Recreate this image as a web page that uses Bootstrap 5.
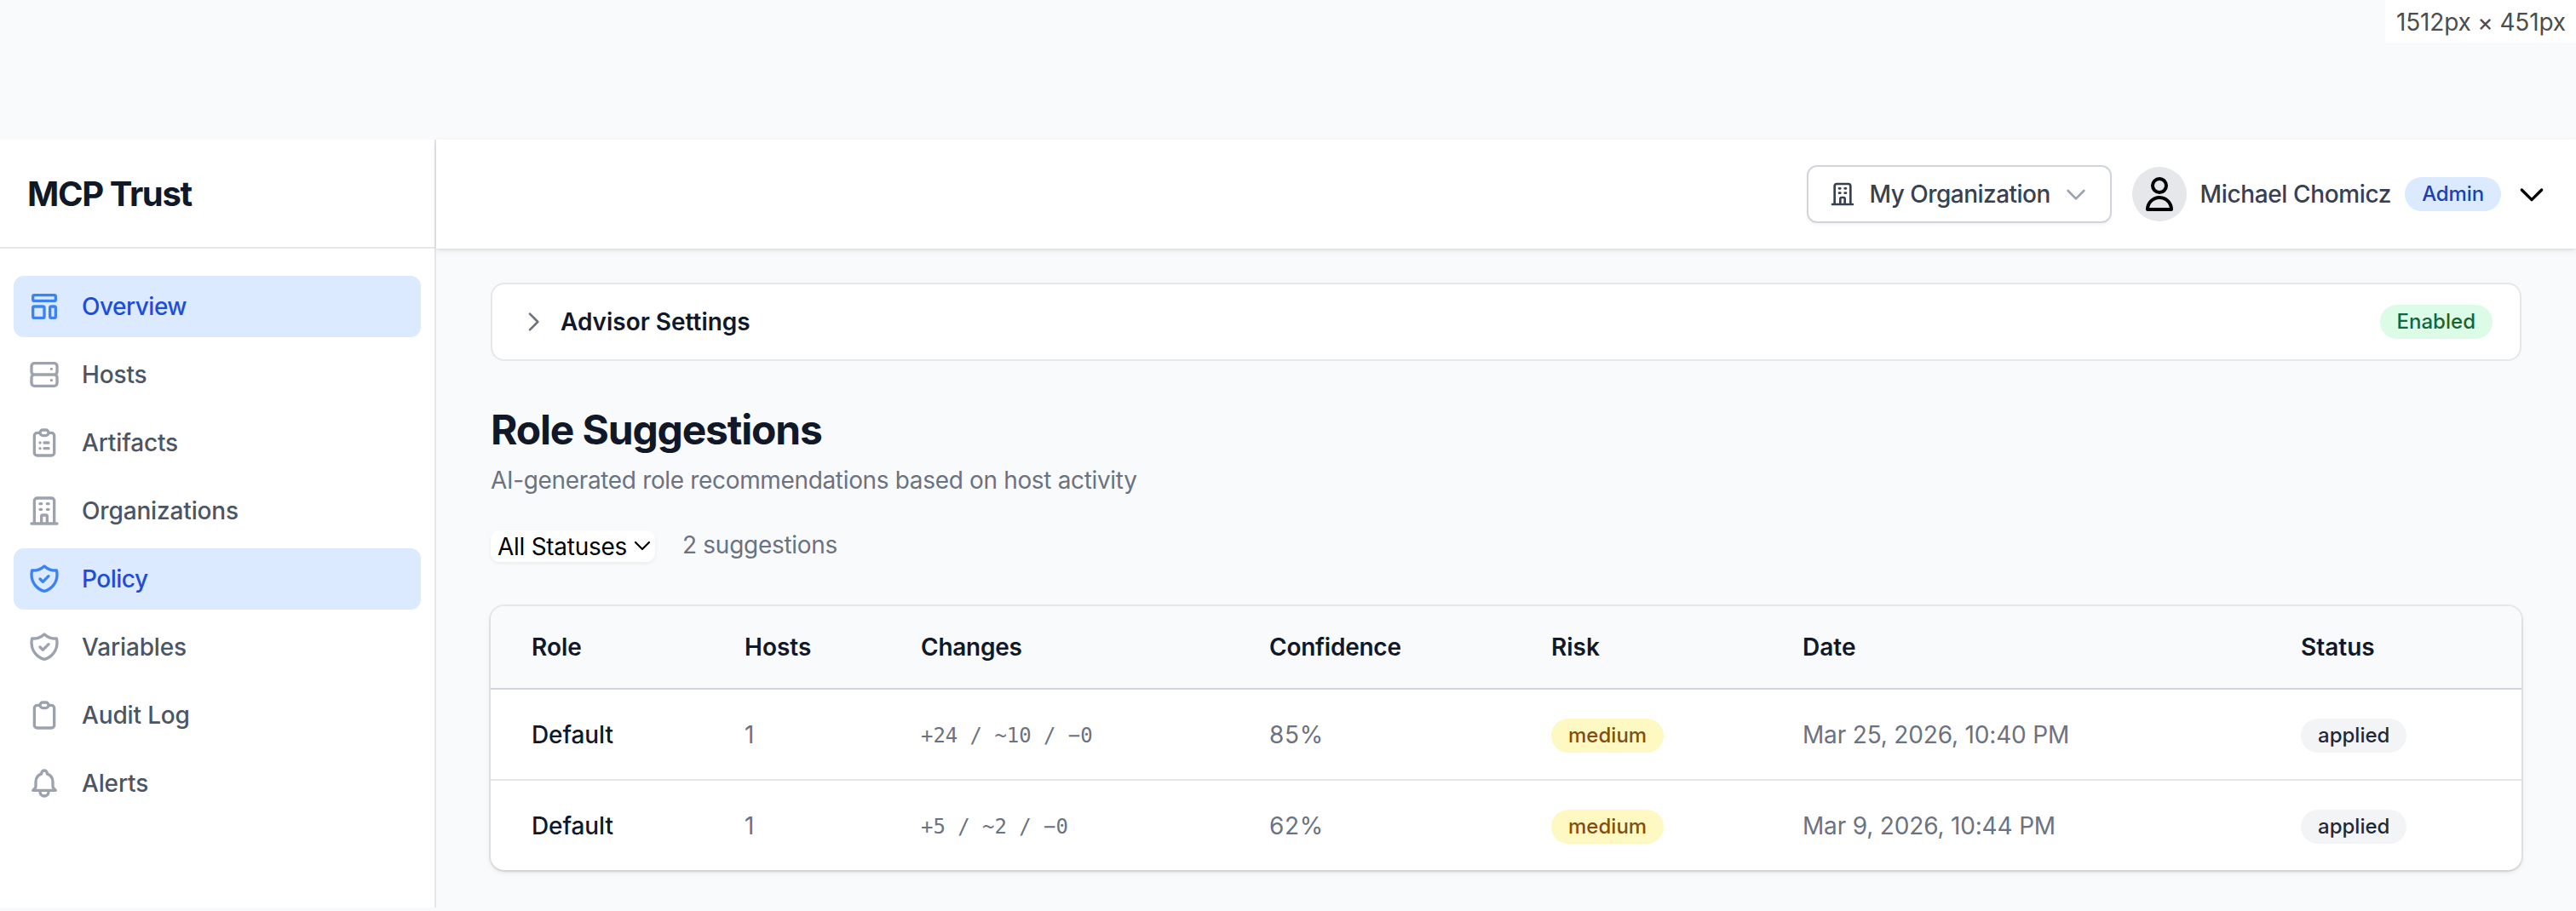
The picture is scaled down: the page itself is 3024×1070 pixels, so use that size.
<!DOCTYPE html>
<html lang="en">
<head>
<meta charset="utf-8">
<meta name="viewport" content="width=device-width, initial-scale=1">
<title>MCP Trust</title>
<link rel="stylesheet" href="https://cdn.jsdelivr.net/npm/bootstrap@5.3.0/dist/css/bootstrap.min.css">
<style>
  body { font-family: Inter, "Liberation Sans", sans-serif; font-size: 28px; line-height: 40px; letter-spacing: -.17px; background: #f9fafc; color: #111827; height: 1070px; overflow: hidden; }
  svg { fill: none; stroke: currentColor; stroke-width: 2; stroke-linecap: round; stroke-linejoin: round; flex: none; display: block; }
  .i32 { width: 32px; height: 32px; }
  .i40 { width: 40px; height: 40px; }
  .i48 { width: 48px; height: 48px; }
  .topstrip { height: 164px; }
  .sizetag { width: 224px; height: 50px; background: #fff; color: #4d4d4d; padding: 6px 0 0 13px; white-space: nowrap; }
  .shell { height: 902px; }
  .sidebar { width: 512px; background: #fff; border-right: 2px solid #e5e7eb; }
  .brand { height: 128px; border-bottom: 2px solid #e5e7eb; padding: 2px 0 0 32px; font-size: 40px; font-weight: 650; letter-spacing: -1.35px; }
  .sidenav { padding: 32px 16px; gap: 8px; }
  .sidenav .nav-link { height: 72px; padding: 0 16px; gap: 24px; border-radius: 12px; color: #4b5563; font-weight: 500; letter-spacing: -.15px; }
  .sidenav .nav-link svg { color: #9ca3af; }
  .sidenav .nav-link.active { background: #dbeafe; color: #1d4ed8; letter-spacing: -.5px; }
  .sidenav .nav-link.active svg { color: #3b82f6; }
  .topbar { height: 128px; background: #fff; padding-right: 32px; color: #374151; font-weight: 500; box-shadow: 0 2px 6px rgba(0,0,0,.1), 0 2px 4px -2px rgba(0,0,0,.1); }
  .orgbtn { width: 358px; height: 68px; border: 2px solid #d1d5db; border-radius: 12px; padding: 0 24px; margin-right: 24px; background: #fff; box-shadow: 0 2px 4px rgba(0,0,0,.05); letter-spacing: -.52px; white-space: nowrap; }
  .avatar { width: 64px; height: 64px; background: #e5e7eb; color: #000; margin-right: 16px; }
  .pill { height: 40px; padding: 0 20px; border-radius: 20px; font-size: 24px; font-weight: 500; letter-spacing: .02px; white-space: nowrap; display: inline-flex; align-items: center; }
  .pill-blue { background: #dbeafe; color: #1e40af; }
  .pill-green { background: #dcfce7; color: #166534; }
  .pill-yellow { background: #fef9c3; color: #854d0e; }
  .pill-gray { background: #f3f4f6; color: #1f2937; }
  .content { padding: 40px 64px 0; }
  .advisor { height: 92px; border: 2px solid #e5e7eb; border-radius: 16px; background: #fff; padding: 0 32px; font-weight: 600; letter-spacing: -.02px; }
  .title { font-size: 48px; line-height: 64px; font-weight: 700; letter-spacing: -1.18px; margin: 48px 0 8px; padding-top: 1px; height: 64px; }
  .muted { color: #6b7280; }
  .filters { height: 40px; margin: 36px 0 52px; }
  .statuspick { width: 193px; height: 37px; border-radius: 10px; background: #fff; color: #000; padding-left: 8px; letter-spacing: -.28px; box-shadow: 0 2px 4px rgba(0,0,0,.06); white-space: nowrap; }
  .statuspick svg { width: 20px; height: 12px; stroke-width: 2.2; margin: -2px 0 0 8px; }
  .panel { border-radius: 16px; overflow: hidden; background: #fff; box-shadow: 0 0 0 2px rgba(0,0,0,.06), 0 2px 6px rgba(0,0,0,.1), 0 2px 4px -2px rgba(0,0,0,.1); }
  .grid-table { width: 2384px; table-layout: fixed; border-collapse: separate; border-spacing: 0; }
  .grid-table th { height: 98px; padding: 0; font-weight: 600; letter-spacing: 0; background: #f9fafc; border-bottom: 2px solid #d1d5db; }
  .grid-table th:nth-child(3), .grid-table th:nth-child(4) { letter-spacing: -.25px; }
  .grid-table td { height: 107px; padding: 0; vertical-align: middle; color: #6b7280; border-bottom: 2px solid #e5e7eb; }
  .grid-table tr:last-child td { height: 105px; border-bottom: 0; }
  .grid-table th:first-child, .grid-table td:first-child { padding-left: 48px; }
  .grid-table td:first-child { color: #111827; font-weight: 500; letter-spacing: -.1px; }
  .grid-table td:nth-child(4) { letter-spacing: .7px; }
  .grid-table td .pill { vertical-align: middle; }
  .grid-table td.delta { font-family: "DejaVu Sans Mono", "Liberation Mono", monospace; font-size: 24px; letter-spacing: -.05px; padding-top: 2px; }
</style>
<script defer src="https://cdn.jsdelivr.net/npm/bootstrap@5.3.0/dist/js/bootstrap.bundle.min.js"></script>
</head>
<body>
<div class="topstrip d-flex justify-content-end align-items-start"><div class="sizetag">1512px × 451px</div></div>
<div class="shell d-flex">
  <aside class="sidebar flex-shrink-0">
    <div class="brand d-flex align-items-center">MCP Trust</div>
    <nav class="sidenav nav flex-column">
      <a class="nav-link active d-flex align-items-center" href="#"><svg class="i40" viewBox="0 0 24 24"><path d="M4 5a1 1 0 011-1h14a1 1 0 011 1v2a1 1 0 01-1 1H5a1 1 0 01-1-1V5zM4 13a1 1 0 011-1h6a1 1 0 011 1v6a1 1 0 01-1 1H5a1 1 0 01-1-1v-6zM16 13a1 1 0 011-1h2a1 1 0 011 1v6a1 1 0 01-1 1h-2a1 1 0 01-1-1v-6z"/></svg>Overview</a>
      <a class="nav-link d-flex align-items-center" href="#"><svg class="i40" viewBox="0 0 24 24"><path d="M5 12h14M5 12a2 2 0 01-2-2V6a2 2 0 012-2h14a2 2 0 012 2v4a2 2 0 01-2 2M5 12a2 2 0 00-2 2v4a2 2 0 002 2h14a2 2 0 002-2v-4a2 2 0 00-2-2m-2-4h.01M17 16h.01"/></svg>Hosts</a>
      <a class="nav-link d-flex align-items-center" href="#"><svg class="i40" viewBox="0 0 24 24"><path d="M9 5H7a2 2 0 00-2 2v12a2 2 0 002 2h10a2 2 0 002-2V7a2 2 0 00-2-2h-2M9 5a2 2 0 002 2h2a2 2 0 002-2M9 5a2 2 0 012-2h2a2 2 0 012 2m-3 7h3m-3 4h3m-6-4h.01M9 16h.01"/></svg>Artifacts</a>
      <a class="nav-link d-flex align-items-center" href="#"><svg class="i40" viewBox="0 0 24 24"><path d="M19 21V5a2 2 0 00-2-2H7a2 2 0 00-2 2v16m14 0h2m-2 0h-5m-9 0H3m2 0h5M9 7h1m-1 4h1m4-4h1m-1 4h1m-5 10v-5a1 1 0 011-1h2a1 1 0 011 1v5m-4 0h4"/></svg>Organizations</a>
      <a class="nav-link active d-flex align-items-center" href="#"><svg class="i40" viewBox="0 0 24 24"><path d="M9 12l2 2 4-4m5.618-4.016A11.955 11.955 0 0112 2.944a11.955 11.955 0 01-8.618 3.04A12.02 12.02 0 003 9c0 5.591 3.824 10.29 9 11.622 5.176-1.332 9-6.03 9-11.622 0-1.042-.133-2.052-.382-3.016z"/></svg>Policy</a>
      <a class="nav-link d-flex align-items-center" href="#"><svg class="i40" viewBox="0 0 24 24"><path d="M9 12l2 2 4-4m5.618-4.016A11.955 11.955 0 0112 2.944a11.955 11.955 0 01-8.618 3.04A12.02 12.02 0 003 9c0 5.591 3.824 10.29 9 11.622 5.176-1.332 9-6.03 9-11.622 0-1.042-.133-2.052-.382-3.016z"/></svg>Variables</a>
      <a class="nav-link d-flex align-items-center" href="#"><svg class="i40" viewBox="0 0 24 24"><path d="M9 5H7a2 2 0 00-2 2v12a2 2 0 002 2h10a2 2 0 002-2V7a2 2 0 00-2-2h-2M9 5a2 2 0 002 2h2a2 2 0 002-2M9 5a2 2 0 012-2h2a2 2 0 012 2"/></svg>Audit Log</a>
      <a class="nav-link d-flex align-items-center" href="#"><svg class="i40" viewBox="0 0 24 24"><path d="M15 17h5l-1.405-1.405A2.032 2.032 0 0118 14.158V11a6.002 6.002 0 00-4-5.659V5a2 2 0 10-4 0v.341C7.67 6.165 6 8.388 6 11v3.159c0 .538-.214 1.055-.595 1.436L4 17h5m6 0v1a3 3 0 11-6 0v-1m6 0H9"/></svg>Alerts</a>
    </nav>
  </aside>
  <div class="flex-grow-1">
    <header class="topbar d-flex align-items-center justify-content-end">
      <div class="orgbtn d-flex align-items-center">
        <svg class="i32 me-3" viewBox="0 0 24 24"><path d="M19 21V5a2 2 0 00-2-2H7a2 2 0 00-2 2v16m14 0h2m-2 0h-5m-9 0H3m2 0h5M9 7h1m-1 4h1m4-4h1m-1 4h1m-5 10v-5a1 1 0 011-1h2a1 1 0 011 1v5m-4 0h4"/></svg>
        <span>My Organization</span>
        <svg class="i32 ms-auto" style="color:#9ca3af" viewBox="0 0 24 24"><path d="M19 9l-7 7-7-7"/></svg>
      </div>
      <div class="avatar rounded-circle d-flex align-items-center justify-content-center"><svg class="i48" viewBox="0 0 24 24"><path d="M16 7a4 4 0 11-8 0 4 4 0 018 0zM12 14a7 7 0 00-7 7h14a7 7 0 00-7-7z"/></svg></div>
      <span class="me-3" style="letter-spacing:-.36px">Michael Chomicz</span>
      <span class="pill pill-blue me-3" style="letter-spacing:-.13px">Admin</span>
      <svg class="i40 text-black" viewBox="0 0 24 24"><path d="M19 9l-7 7-7-7"/></svg>
    </header>
    <main class="content">
      <div class="advisor d-flex align-items-center">
        <svg class="i32 me-3 muted" viewBox="0 0 24 24"><path d="M9 5l7 7-7 7"/></svg>
        <span>Advisor Settings</span>
        <span class="pill pill-green ms-auto">Enabled</span>
      </div>
      <h1 class="title">Role Suggestions</h1>
      <p class="muted mb-0" style="letter-spacing:-.34px">AI-generated role recommendations based on host activity</p>
      <div class="filters d-flex">
        <div class="statuspick d-flex align-items-center align-self-end">All Statuses<svg viewBox="0 0 20 12"><path d="M2 2l8 8 8-8"/></svg></div>
        <span class="muted" style="margin-left:32px;letter-spacing:-.29px">2 suggestions</span>
      </div>
      <div class="panel">
        <table class="grid-table">
          <colgroup><col style="width:298px"><col style="width:207px"><col style="width:409px"><col style="width:331px"><col style="width:295px"><col style="width:585px"><col style="width:259px"></colgroup>
          <thead><tr><th>Role</th><th>Hosts</th><th>Changes</th><th>Confidence</th><th>Risk</th><th>Date</th><th>Status</th></tr></thead>
          <tbody>
            <tr><td>Default</td><td>1</td><td class="delta">+24 / ~10 / −0</td><td>85%</td><td><span class="pill pill-yellow">medium</span></td><td>Mar 25, 2026, 10:40 PM</td><td><span class="pill pill-gray">applied</span></td></tr>
            <tr><td>Default</td><td>1</td><td class="delta">+5 / ~2 / −0</td><td>62%</td><td><span class="pill pill-yellow">medium</span></td><td>Mar 9, 2026, 10:44 PM</td><td><span class="pill pill-gray">applied</span></td></tr>
          </tbody>
        </table>
      </div>
    </main>
  </div>
</div>
</body>
</html>
